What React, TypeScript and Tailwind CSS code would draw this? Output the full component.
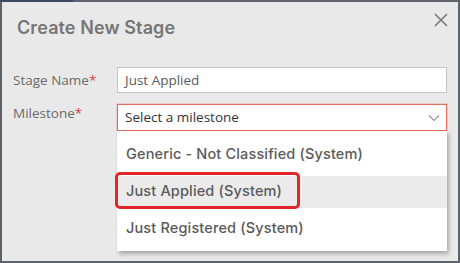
const options = [
    { label: 'Generic - Not Classified (System)', h: 'h-[45px]', active: false },
    { label: 'Just Applied (System)', h: 'h-[32px] pb-[3px]', active: true },
    { label: 'Just Registered (System)', h: 'h-[43px] pb-[3px]', active: false },
];

export default function App() {
    return (
        <div className="w-[460px] h-[263px] flex flex-col bg-[#e9e9e9] font-['Open_Sans',sans-serif]">
            {/* top edge: bit of the page behind */}
            <div className="flex h-[2px] shrink-0">
                <div className="w-[73px] bg-[#3c4a63]" />
                <div className="flex-1 bg-[#5f646c]" />
            </div>

            <div className="flex-1 flex flex-col border-x-2 border-b-2 border-[#5f646c] min-h-0">
                {/* Header */}
                <div className="flex justify-between items-start pl-[15px] pr-[9px] pt-[12px]">
                    <h2 className="font-['Inter',sans-serif] font-semibold text-[18px] leading-[28px] text-[#767676] tracking-[0.1px]">
                        Create New Stage
                    </h2>
                    <button className="-mt-[2px] text-[#7a7a7a]" aria-label="close">
                        <svg width="16" height="16" viewBox="0 0 16 16" fill="none" stroke="currentColor" strokeWidth="1.6">
                            <path d="M2 2 L14 14 M14 2 L2 14" />
                        </svg>
                    </button>
                </div>

                {/* Form */}
                <div className="flex flex-col gap-[11px] pl-[11px] pr-[11px] mt-[25px]">
                    <div className="flex items-center">
                        <label className="w-[104px] text-[13.5px] text-[#6b6b6b]">
                            Stage Name<span className="text-[#e0393e]">*</span>
                        </label>
                        <div className="flex-1 h-[26px] bg-white border border-[#c4c4c4] flex items-center px-[7px] text-[13.5px] text-[#5a5a5a]">
                            Just Applied
                        </div>
                    </div>

                    <div className="flex items-start">
                        <label className="w-[104px] text-[13.5px] text-[#6b6b6b] leading-[20px] -mt-[1px]">
                            Milestone<span className="text-[#e0393e]">*</span>
                        </label>
                        <div className="flex-1 relative">
                            <div className="h-[27px] bg-white border border-[#df6f62] shadow-[0_0_0_0.5px_#f0b0a8] flex items-center justify-between pl-[7px] pr-[6px] text-[13.5px] text-[#333]">
                                <span>Select a milestone</span>
                                <svg width="12" height="8" viewBox="0 0 12 8" fill="none" stroke="#9a9a9a" strokeWidth="1.2">
                                    <path d="M1 1.5 L6 6.5 L11 1.5" />
                                </svg>
                            </div>

                            {/* Dropdown menu */}
                            <div className="absolute left-0 right-0 top-full bg-white shadow-[2px_3px_4px_rgba(0,0,0,0.28)] font-['Inter',sans-serif]">
                                {options.map((o) => (
                                    <div
                                        key={o.label}
                                        className={`${o.h} flex items-center px-[9px] text-[14.5px] tracking-[0.15px] font-medium text-[#5a5a5a] ${o.active ? 'bg-[#ebebeb]' : ''}`}
                                    >
                                        {o.label}
                                    </div>
                                ))}
                                {/* annotation box */}
                                <div className="absolute left-[-2px] top-[41px] w-[185px] h-[37px] border-[3px] border-[#e3262c] rounded-[5px]" />
                            </div>
                        </div>
                    </div>
                </div>
            </div>
        </div>
    );
}
